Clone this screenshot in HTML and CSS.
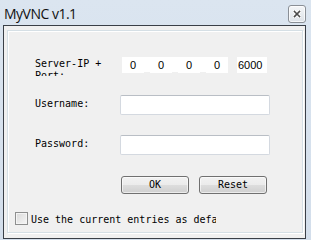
FILE: index.html
```html
<!DOCTYPE html>
<html>
<head>
<meta charset="utf-8">
<link rel="stylesheet" href="styles.css">
</head>
<body>
<div class="window">
  <div class="titlebar">
    <span class="title">MyVNC v1.1</span>
    <span class="close">
      <svg width="8" height="8" viewBox="0 0 8 8">
        <path d="M1.5 1.5 L6.5 6.5 M6.5 1.5 L1.5 6.5" stroke="#fff" stroke-width="3.2" stroke-linecap="square"/>
        <path d="M1.5 1.5 L6.5 6.5 M6.5 1.5 L1.5 6.5" stroke="#4a4a4a" stroke-width="1.6" stroke-linecap="square"/>
      </svg>
    </span>
  </div>
  <div class="client">
    <div class="panel">
      <div class="row row-ip">
        <div class="label label-clip">Server-IP + Port:</div>
        <div class="ip">
          <span class="seg">0</span><span class="dot"></span><span class="seg">0</span><span class="dot"></span><span class="seg">0</span><span class="dot"></span><span class="seg">0</span>
        </div>
        <div class="port">6000</div>
      </div>
      <div class="row row-user">
        <div class="label">Username:</div>
        <div class="input"></div>
      </div>
      <div class="row row-pass">
        <div class="label">Password:</div>
        <div class="input"></div>
      </div>
      <div class="row row-buttons">
        <div class="button">OK</div>
        <div class="button">Reset</div>
      </div>
      <div class="row row-check">
        <span class="checkbox"></span>
        <span class="check-label">Use the current entries as default</span>
      </div>
    </div>
  </div>
</div>
</body>
</html>
```
FILE: styles.css
```css
html, body {
  margin: 0;
  padding: 0;
  width: 311px;
  height: 240px;
  overflow: hidden;
  background: #d9e3ee;
}
.window {
  width: 311px;
  height: 240px;
  display: flex;
  flex-direction: column;
  background: linear-gradient(#dbe5f0, #d3deeb);
}
.titlebar {
  height: 25px;
  flex: none;
  display: flex;
  justify-content: space-between;
  align-items: flex-start;
}
.title {
  font-family: "Open Sans", "Noto Sans", sans-serif;
  font-size: 14px;
  letter-spacing: -0.5px;
  line-height: 24px;
  padding-top: 2px;
  padding-left: 4px;
  color: #111;
}
.close {
  margin-top: 5px;
  margin-right: 5px;
  width: 16px;
  height: 16px;
  border: 1px solid #8a8f96;
  border-radius: 3px;
  background: linear-gradient(#f4f6f8, #dde2e8);
  box-shadow: inset 0 0 0 1px rgba(255,255,255,0.7);
  display: flex;
  align-items: center;
  justify-content: center;
}
.client {
  flex: 1;
  margin: 0 5px 1px 3px;
  border: 1px solid #3a3f47;
  background: #f0f0f0;
  display: flex;
  padding: 4px 2px 5px 3px;
}
.panel {
  flex: 1;
  border: 1px solid #d5dfe5;
  box-shadow: inset 1px 1px 0 #fff, 1px 1px 0 #fff;
  display: flex;
  flex-direction: column;
  font-family: "DejaVu Sans Mono", "Liberation Mono", monospace;
  font-size: 10px;
  line-height: 12px;
  color: #000;
}
.row {
  display: flex;
  padding-left: 27px;
}
.label {
  width: 85px;
  flex: none;
}
.label-clip {
  height: 18px;
  padding-top: 1px;
  overflow: hidden;
}
.row-ip {
  margin-top: 26px;
  align-items: flex-start;
}
.ip {
  display: flex;
  align-items: flex-start;
  margin-left: 2px;
  font-family: "Liberation Sans", Arial, sans-serif;
  font-size: 11px;
}
.seg {
  width: 22px;
  height: 16px;
  line-height: 16px;
  background: #fff;
  text-align: center;
}
.dot {
  width: 6px;
  height: 15px;
  background: #fff;
}
.port {
  margin-left: 9px;
  width: 29px;
  height: 16px;
  line-height: 16px;
  padding-left: 1px;
  background: #fff;
  font-family: "Liberation Sans", Arial, sans-serif;
  font-size: 11px;
}
.row-user {
  margin-top: 19px;
  align-items: center;
}
.row-pass {
  margin-top: 20px;
  align-items: center;
}
.row-user .label, .row-pass .label {
  padding-bottom: 2px;
}
.input {
  width: 148px;
  height: 18px;
  background: #fff;
  border: 1px solid #d4d9e0;
  border-top-color: #b9bec5;
  border-radius: 2px;
}
.row-buttons {
  margin-top: 21px;
  padding-left: 113px;
  gap: 10px;
}
.button {
  width: 66px;
  height: 16px;
  border: 1px solid #707070;
  border-radius: 3px;
  background: linear-gradient(#f2f2f2 0%, #ebebeb 50%, #dddddd 51%, #cfcfcf 100%);
  box-shadow: inset 0 0 0 1px rgba(255,255,255,0.6);
  text-align: center;
  line-height: 16px;
}
.row-check {
  margin-top: 18px;
  padding-left: 7px;
  align-items: flex-start;
}
.checkbox {
  width: 11px;
  height: 11px;
  border: 1px solid #8e8f8f;
  background: linear-gradient(135deg, #d9d9d9, #f6f6f6);
  box-shadow: inset 0 0 0 1px #f4f4f4;
  flex: none;
}
.check-label {
  margin-left: 3px;
  margin-top: 2px;
  width: 185px;
  white-space: nowrap;
  overflow: hidden;
}
```
